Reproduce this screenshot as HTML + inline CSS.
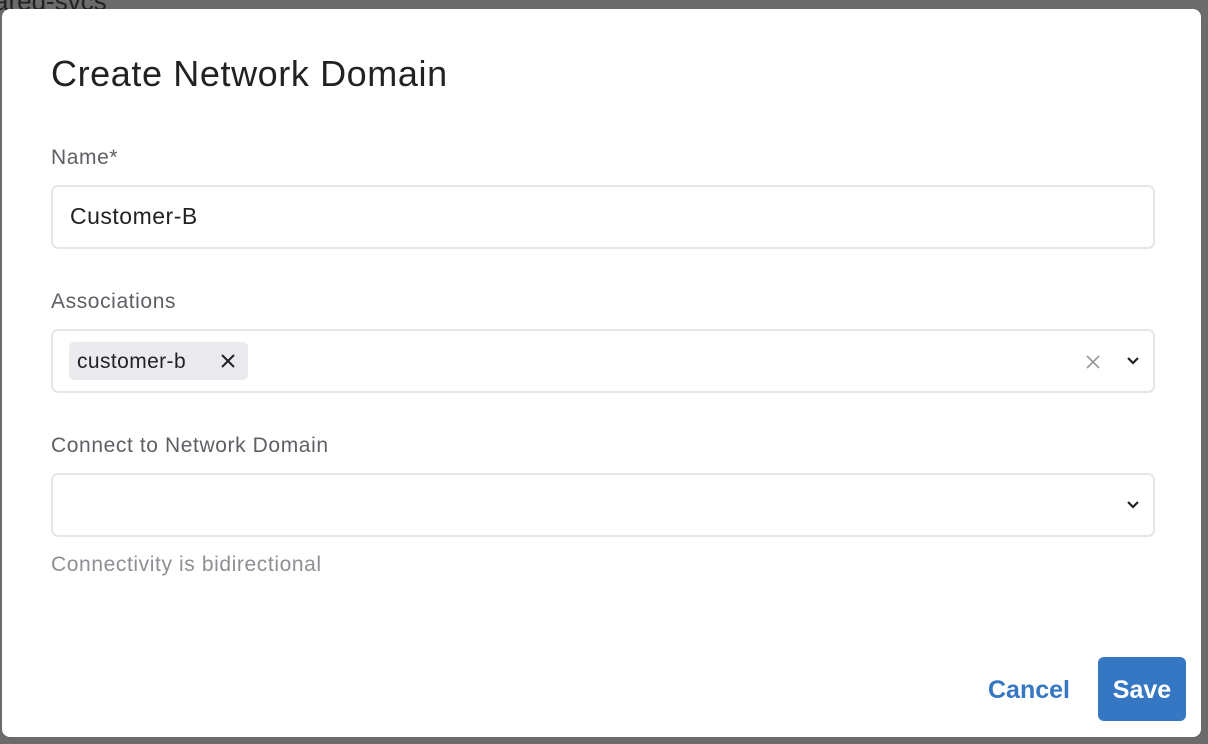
<!DOCTYPE html>
<html><head><style>
body{margin:0;width:1208px;height:744px;background:#6b6b6b;position:relative;overflow:hidden;font-family:"Liberation Sans",sans-serif;}
.bg{position:absolute;left:-6px;top:-14px;font-size:26px;color:#222;}
.modal{position:absolute;left:2px;top:9px;width:1199px;height:728px;background:#fff;border-radius:8px;}
h1{position:absolute;left:49px;top:44px;margin:0;font-weight:normal;font-size:36px;letter-spacing:0.6px;color:#222;}
.lbl{position:absolute;left:49px;font-size:21px;letter-spacing:0.6px;color:#5f5f66;}
.inp{position:absolute;left:49px;width:1100px;height:60px;border:2px solid #e6e6ea;border-radius:7px;}
.txt{position:absolute;left:17px;top:16px;font-size:23px;letter-spacing:0.5px;color:#222;}
.tag{position:absolute;left:16px;top:11px;width:179px;height:38px;background:#ebebef;border-radius:5px;font-size:21px;letter-spacing:0.4px;color:#222;}
.hint{position:absolute;left:49px;top:544px;font-size:21px;letter-spacing:0.6px;color:#8e8e94;}
.cancel{position:absolute;left:986px;top:667px;font-size:25px;color:#3577c2;font-weight:bold;}
.save{position:absolute;left:1096px;top:648px;width:88px;height:64px;background:#3577c2;border-radius:6px;color:#fff;font-size:25px;font-weight:bold;text-align:center;line-height:66px;}
</style></head><body>
<div class="bg">ared-svcs</div>
<div class="modal">
<h1>Create Network Domain</h1>
<div class="lbl" style="top:137px">Name*</div>
<div class="inp" style="top:176px"><div class="txt">Customer-B</div></div>
<div class="lbl" style="top:281px">Associations</div>
<div class="inp" style="top:320px">
 <div class="tag"><span style="position:absolute;left:8px;top:8px">customer-b</span>
 <svg style="position:absolute;left:151px;top:11px" width="16" height="16"><path d="M2 2L14 14M14 2L2 14" stroke="#222" stroke-width="2"/></svg></div>
 <svg style="position:absolute;left:1032px;top:23px" width="16" height="16"><path d="M2 2L14 14M14 2L2 14" stroke="#999" stroke-width="1.6"/></svg>
 <svg style="position:absolute;left:1073px;top:25px" width="14" height="10"><path d="M2 2L7 7L12 2" stroke="#222" stroke-width="2.2" fill="none"/></svg>
</div>
<div class="lbl" style="top:425px">Connect to Network Domain</div>
<div class="inp" style="top:464px">
 <svg style="position:absolute;left:1073px;top:25px" width="14" height="10"><path d="M2 2L7 7L12 2" stroke="#222" stroke-width="2.2" fill="none"/></svg>
</div>
<div class="hint">Connectivity is bidirectional</div>
<div class="cancel">Cancel</div>
<div class="save">Save</div>
</div>
</body></html>
